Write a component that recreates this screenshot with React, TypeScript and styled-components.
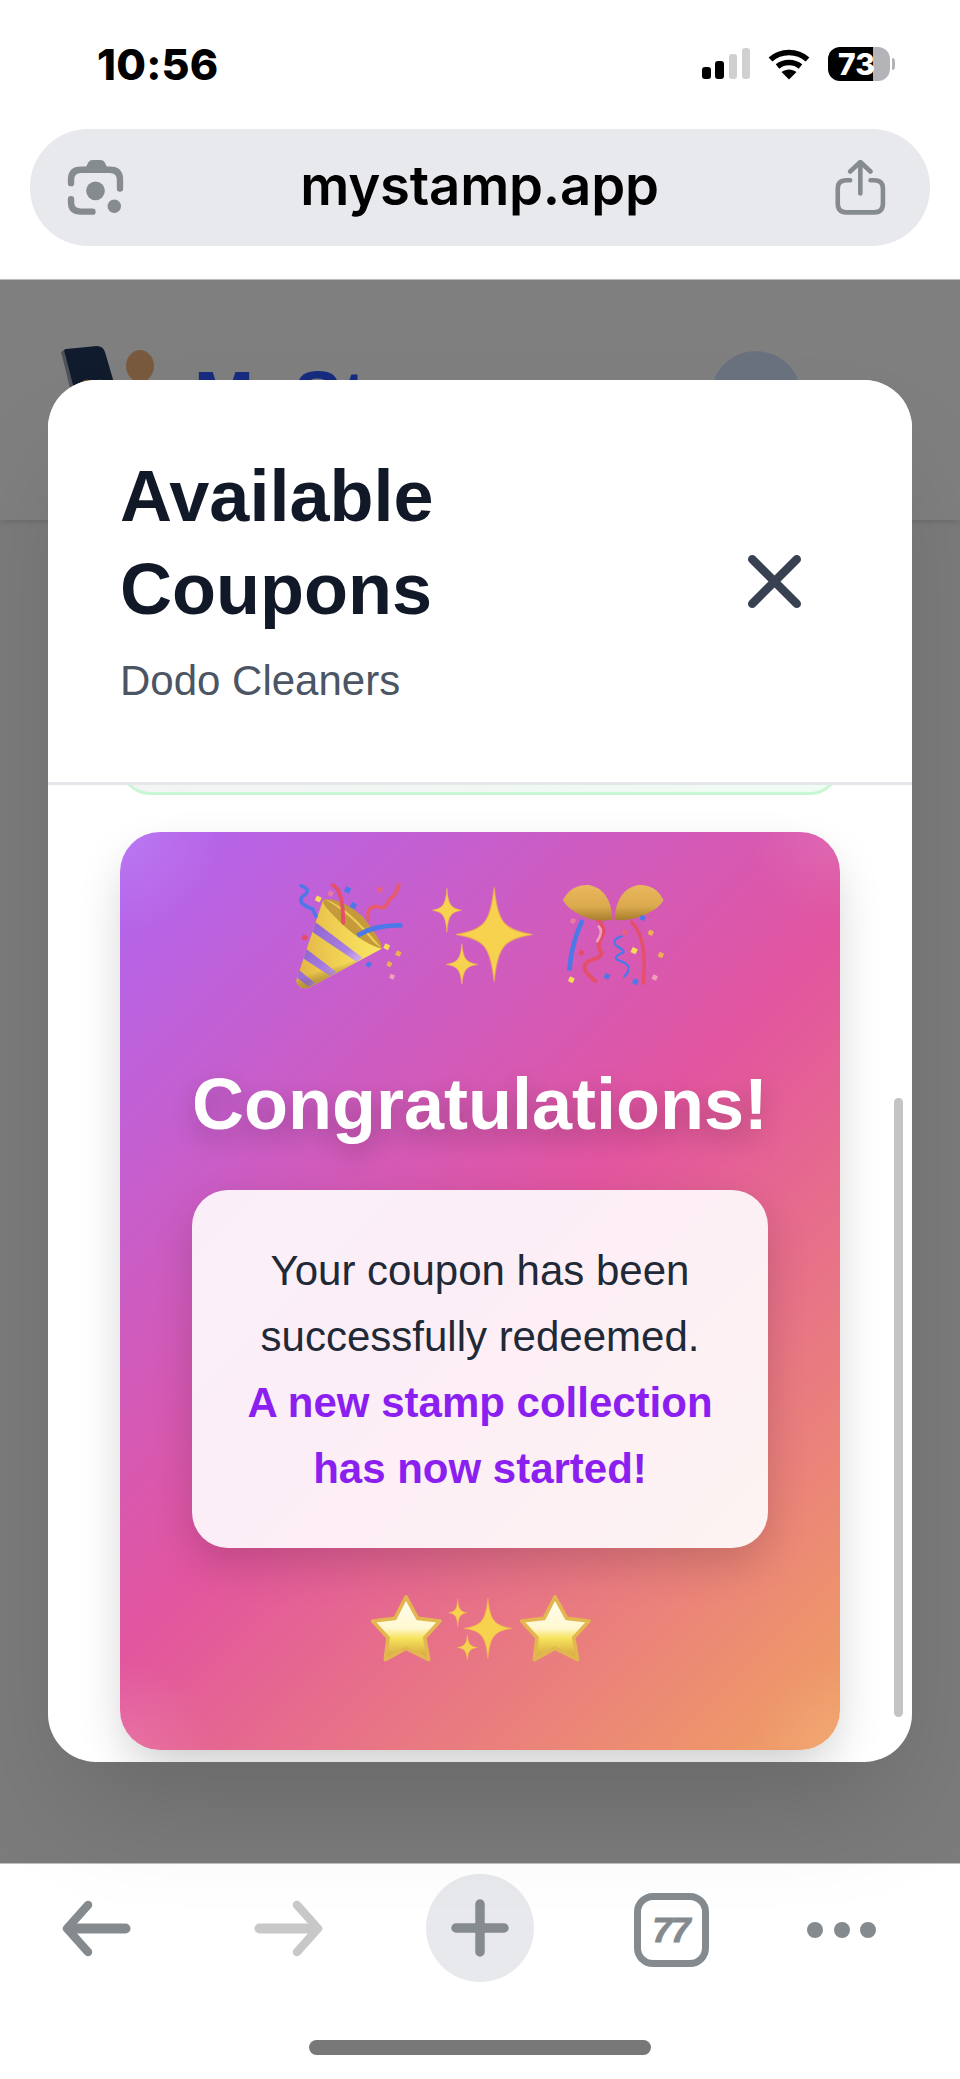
import React from "react";
import styled, { createGlobalStyle } from "styled-components";
import { X } from "lucide-react";

const Global = createGlobalStyle`
  html, body { margin: 0; padding: 0; background: #fff; }
  * { box-sizing: border-box; }
  #root { width: 960px; height: 2079px; }
`;

const Phone = styled.div`
  width: 960px;
  height: 2079px;
  display: flex;
  flex-direction: column;
  overflow: hidden;
  background: #fff;
  font-family: "Liberation Sans", Arial, sans-serif;
`;

const StatusBar = styled.div`
  height: 127px;
  flex: none;
  padding: 0 65px 0 97px;
  display: flex;
  align-items: center;
  justify-content: space-between;
`;

const Time = styled.span`
  font-family: Inter, "Liberation Sans", sans-serif;
  font-weight: 800;
  font-size: 43px;
  line-height: 50px;
  letter-spacing: 0.2px;
  color: #000;
`;

const StatusIcons = styled.div`
  display: flex;
  align-items: center;
  gap: 18px;
`;

const BatteryWrap = styled.div`
  display: flex;
  align-items: center;
  gap: 2px;
`;

const BatteryBody = styled.div`
  width: 62px;
  height: 34px;
  border-radius: 12px;
  background: linear-gradient(90deg, #000 45px, #b4b4b8 45px);
  color: #fff;
  font-family: Inter, "Liberation Sans", sans-serif;
  font-weight: 800;
  font-size: 30px;
  line-height: 34px;
  padding-left: 10px;
`;

const BatteryNub = styled.div`
  width: 3px;
  height: 12px;
  border-radius: 0 3px 3px 0;
  background: #b4b4b8;
`;

const UrlArea = styled.div`
  height: 152px;
  flex: none;
  padding: 2px 30px 0;
`;

const UrlBar = styled.div`
  height: 117px;
  border-radius: 58px;
  background: #e8e9ed;
  display: flex;
  align-items: center;
  justify-content: space-between;
  padding: 0 44px 0 37px;
`;

const UrlText = styled.span`
  font-family: Inter, "Liberation Sans", sans-serif;
  font-weight: 600;
  font-size: 54.5px;
  line-height: 64px;
  color: #000;
  letter-spacing: -0.2px;
  padding-bottom: 5px;
`;

const Viewport = styled.div`
  position: relative;
  flex: 1;
  min-height: 0;
  background: #f6f6f7;
  border-top: 1px solid #c0c0c0;
  border-bottom: 1px solid #c0c0c0;
`;

const PageHeader = styled.div`
  height: 240px;
  background: #fff;
  display: flex;
  align-items: flex-start;
  padding: 66px 159px 0 62px;
  box-shadow: 0 2px 6px rgba(0, 0, 0, 0.12);
`;

const Brand = styled.span`
  margin-left: 78px;
  margin-top: 3px;
  font-weight: 700;
  font-size: 72px;
  line-height: 96px;
  color: #2f58ff;
  flex: 1;
`;

const Avatar = styled.div`
  width: 90px;
  height: 90px;
  border-radius: 50%;
  margin-top: 5px;
  background: #d6e4ff;
`;

const Backdrop = styled.div`
  position: absolute;
  inset: 0;
  background: rgba(0, 0, 0, 0.5);
`;

const Modal = styled.div`
  position: absolute;
  left: 48px;
  top: 100px;
  width: 864px;
  height: 1382px;
  background: #fff;
  border-radius: 48px;
  overflow: hidden;
  display: flex;
  flex-direction: column;
  box-shadow: 0 60px 120px -30px rgba(0, 0, 0, 0.17);
`;

const ModalHeader = styled.div`
  flex: none;
  height: 405px;
  padding: 70px 93px 0 72px;
  border-bottom: 3px solid #e5e7eb;
  display: flex;
  align-items: flex-start;
  justify-content: space-between;
  background: #fff;
`;

const TitleBlock = styled.div`
  width: 440px;
`;

const Title = styled.h2`
  margin: 0;
  font-size: 72px;
  line-height: 93px;
  font-weight: 700;
  color: #111827;
`;

const Subtitle = styled.p`
  margin: 15px 0 0;
  font-size: 42px;
  line-height: 60px;
  color: #4b5563;
`;

const CloseButton = styled.div`
  color: #374151;
  display: flex;
  margin-top: 87px;
`;

const ScrollArea = styled.div`
  flex: 1;
  min-height: 0;
  overflow: hidden;
  padding: 0 72px;
`;

const PreviousCard = styled.div`
  height: 60px;
  margin-top: -50px;
  border: 3px solid #c9f7d6;
  border-radius: 36px;
  background: linear-gradient(90deg, #f3f4f4, #effcf3);
`;

const CongratsCard = styled.div`
  margin-top: 37px;
  height: 918px;
  border-radius: 40px;
  padding: 50px 72px 0;
  display: flex;
  flex-direction: column;
  align-items: center;
  background:
    radial-gradient(circle at 0 0, rgba(255, 255, 255, 0.12), transparent 100px),
    radial-gradient(circle at 100% 0, rgba(255, 255, 255, 0.1), transparent 90px),
    radial-gradient(circle at 0 100%, rgba(255, 255, 255, 0.12), transparent 90px),
    radial-gradient(circle at 100% 100%, rgba(255, 255, 255, 0.1), transparent 90px),
    linear-gradient(135deg, #b066f2 0%, #e2559f 50%, #f0a062 100%);
  box-shadow: 0 20px 50px -10px rgba(0, 0, 0, 0.24);
`;

const EmojiRow = styled.div`
  height: 107px;
  display: flex;
  align-items: center;
  justify-content: center;
  gap: 29px;
  margin-bottom: 67px;
`;

const Heading = styled.h3`
  margin: 0 0 38px;
  font-size: 72px;
  line-height: 96px;
  font-weight: 700;
  color: #fff;
  white-space: nowrap;
  text-shadow: 0 10px 24px rgba(0, 0, 0, 0.22);
`;

const MessageBox = styled.div`
  width: 576px;
  height: 358px;
  padding: 47.5px 0;
  border-radius: 36px;
  background: rgba(255, 255, 255, 0.9);
  box-shadow: 0 16px 40px rgba(0, 0, 0, 0.16);
  text-align: center;
  font-size: 42px;
  line-height: 66px;
  color: #1f2937;
`;

const Highlight = styled.strong`
  display: block;
  font-weight: 700;
  color: #8a1ff0;
`;

const StarRow = styled.div`
  margin-top: 47px;
  height: 67px;
  display: flex;
  align-items: center;
  gap: 6px;
`;

const ScrollThumb = styled.div`
  position: absolute;
  right: 9px;
  top: 718px;
  width: 9px;
  height: 619px;
  border-radius: 5px;
  background: #c4c4c4;
`;

const Toolbar = styled.div`
  flex: none;
  height: 215px;
  background: #fff;
  display: flex;
  flex-direction: column;
  align-items: center;
`;

const ToolRow = styled.div`
  width: 100%;
  margin-top: 10px;
  height: 108px;
  display: grid;
  grid-template-columns: 192px 192px 192px 190px 151px;
  justify-items: center;
  align-items: center;
`;

const PlusCircle = styled.div`
  width: 108px;
  height: 108px;
  border-radius: 50%;
  background: #e8e9ed;
  display: flex;
  align-items: center;
  justify-content: center;
`;

const TabCount = styled.div`
  width: 75px;
  height: 74px;
  margin-top: 3px;
  border: 7px solid #858a8e;
  border-radius: 19px;
  display: flex;
  align-items: center;
  justify-content: center;
  color: #858a8e;
  font-weight: 700;
  font-style: italic;
  font-size: 35px;
  line-height: 1;
  letter-spacing: -1px;
  -webkit-text-stroke: 1px #858a8e;
`;

const Dots = styled.div`
  display: flex;
  gap: 10.5px;
  margin-top: 3px;
`;

const Dot = styled.span`
  width: 16px;
  height: 16px;
  border-radius: 50%;
  background: #858a8e;
`;

const HomeIndicator = styled.div`
  width: 342px;
  height: 15px;
  margin-top: 58px;
  border-radius: 8px;
  background: #787878;
`;

const IconSvg = styled.svg`
  display: block;
  flex: none;
`;

const GRAY = "#868b8f";

const Signal = () => (
  <IconSvg width="48" height="32" viewBox="0 0 48 32">
    <rect x="0" y="19" width="9" height="12" rx="3" fill="#000" />
    <rect x="13" y="13" width="9" height="18" rx="3" fill="#000" />
    <rect x="27" y="6" width="8" height="25" rx="3" fill="#d0d0d0" />
    <rect x="40" y="0" width="8" height="31" rx="3" fill="#d0d0d0" />
  </IconSvg>
);

const Wifi = () => (
  <IconSvg width="42" height="32" viewBox="0 0 42 32" fill="none">
    <path d="M2.5 11.5C13 2.2 29 2.2 39.5 11.5" stroke="#000" strokeWidth="5.6" />
    <path d="M9.5 18.5C16 13.2 26 13.2 32.5 18.5" stroke="#000" strokeWidth="5.6" />
    <path d="M13.5 24C18 20.6 24 20.6 28.5 24L21 31.5Z" fill="#000" />
  </IconSvg>
);

const LensIcon = () => (
  <IconSvg width="57" height="57" viewBox="50 28 170 170" fill="none">
    <path d="M62 100V90Q62 60 92 60H178Q208 60 208 90V116" stroke={GRAY} strokeWidth="19" strokeLinecap="round" />
    <path d="M100 64L114 38Q118 31 126 31H150Q158 31 162 38L176 64Z" fill={GRAY} />
    <path d="M62 148V158Q62 185 92 185H126" stroke={GRAY} strokeWidth="19" strokeLinecap="round" />
    <circle cx="135" cy="123" r="28" fill={GRAY} />
    <circle cx="191" cy="169" r="20" fill={GRAY} />
  </IconSvg>
);

const ShareIcon = () => (
  <IconSvg width="51" height="55" viewBox="30 30 155 168" fill="none" stroke={GRAY} strokeWidth="14" strokeLinecap="round" strokeLinejoin="round">
    <path d="M107 132V38M76 65L107 36L138 65" />
    <path d="M76 92H64Q38 92 38 118V164Q38 190 64 190H150Q176 190 176 164V118Q176 92 150 92H138" />
  </IconSvg>
);

const ArrowIcon = ({ color, flip }: { color: string; flip?: boolean }) => (
  <IconSvg
    width="69"
    height="57"
    viewBox="0 0 69 57"
    fill="none"
    stroke={color}
    strokeLinecap="round"
    strokeLinejoin="round"
    transform={flip ? "scale(-1 1)" : undefined}
  >
    <path d="M63.5 28.5H8" strokeWidth="10" />
    <path d="M26 5L5 28.5L26 52" strokeWidth="8.5" />
  </IconSvg>
);

const PlusIcon = () => (
  <IconSvg width="58" height="58" viewBox="0 0 58 58" fill="none" stroke={GRAY} strokeWidth="9.5" strokeLinecap="round">
    <path d="M29 5V53M5 29H53" />
  </IconSvg>
);

const PageLogo = () => (
  <IconSvg width="54" height="70" viewBox="0 0 54 70" style={{ overflow: "visible" }}>
    <path d="M4 3Q0 4 1 9L18 70H62L50 30L43 6Q41 0 35 0Z" fill="#22365c" />
    <path d="M2 4L-1 6L15 70H19Z" fill="#a0a8b4" />
    <ellipse cx="78" cy="20" rx="14" ry="16" fill="#f5b47c" />
    <path d="M72 32H86L84 70H60Z" fill="#f5b47c" />
    <path d="M20 38Q25 32 30 38M33 38Q38 32 43 38" stroke="#f0a858" strokeWidth="3" fill="none" />
  </IconSvg>
);

const diamond = (x: number, y: number, s: number, fill: string, key: string) => (
  <rect key={key} x={x - s / 2} y={y - s / 2} width={s} height={s} rx={2} fill={fill} transform={`rotate(25 ${x} ${y})`} />
);

const PartyPopper = () => (
  <IconSvg width="107" height="107" viewBox="140 97 322 322" fill="none">
    <defs>
      <linearGradient id="coneGold" x1="0" y1="0.4" x2="1" y2="0.4">
        <stop offset="0" stopColor="#e2b445" />
        <stop offset="0.55" stopColor="#f2d455" />
        <stop offset="1" stopColor="#fae566" />
      </linearGradient>
      <linearGradient id="coneShade" x1="0.7" y1="0.35" x2="0.85" y2="0.85">
        <stop offset="0.6" stopColor="#000" stopOpacity="0" />
        <stop offset="1" stopColor="#8a6a20" stopOpacity="0.55" />
      </linearGradient>
      <linearGradient id="stripe" x1="0" y1="0" x2="1" y2="1">
        <stop offset="0" stopColor="#8f62d2" />
        <stop offset="0.7" stopColor="#a97fe0" />
        <stop offset="1" stopColor="#d8b8ee" />
      </linearGradient>
      <clipPath id="coneClip">
        <path d="M222 150L140 395Q148 422 178 416L398 298Z" />
      </clipPath>
    </defs>
    <path d="M222 150L140 395Q148 422 178 416L398 298Z" fill="url(#coneGold)" />
    <g clipPath="url(#coneClip)">
      <path d="M195 215L340 325L322 337L186 245Z" fill="url(#stripe)" />
      <path d="M170 298L262 368L243 380L160 326Z" fill="url(#stripe)" />
      <path d="M147 360L198 402L180 413L140 383Z" fill="url(#stripe)" />
      <path d="M222 150L140 395Q148 422 178 416L398 298Z" fill="url(#coneShade)" />
    </g>
    <path d="M222 150Q215 160 250 195Q330 280 398 298Q404 280 340 200Q270 140 222 150Z" fill="#c49a3a" />
    <path d="M228 150Q290 165 398 296L375 280Q300 190 228 150Z" fill="#eccb55" />
    <path d="M155 108Q190 122 160 140Q140 160 190 178L200 200" stroke="#4d78e8" strokeWidth="11" strokeLinecap="round" />
    <path d="M250 106Q282 120 282 220" stroke="#e4506a" strokeWidth="12" strokeLinecap="round" />
    <path d="M358 210Q350 170 385 170Q410 185 420 150Q440 140 450 105" stroke="#e85a6c" strokeWidth="11" strokeLinecap="round" />
    <path d="M325 258Q380 225 460 228" stroke="#4d78e8" strokeWidth="14" />
    {[
      diamond(207, 148, 16, "#f6dc55", "a"),
      diamond(244, 132, 15, "#e87aa0", "b"),
      diamond(295, 121, 17, "#4d78e8", "c"),
      diamond(313, 168, 17, "#4d78e8", "d"),
      diamond(392, 120, 15, "#e8607a", "e"),
      diamond(166, 264, 15, "#e84a62", "f"),
      diamond(413, 292, 16, "#f6dc55", "g"),
      diamond(448, 312, 15, "#eeb14f", "h"),
      diamond(421, 344, 14, "#eeb14f", "i"),
      diamond(359, 345, 15, "#4d78e8", "j"),
      diamond(429, 382, 14, "#f0a0b8", "k"),
    ]}
  </IconSvg>
);

const spark = (cx: number, cy: number, rx: number, ry: number) => {
  const wx = rx * 0.1;
  const wy = ry * 0.1;
  const ax = rx * 0.25;
  const ay = ry * 0.25;
  return [
    `M${cx} ${cy - ry}`,
    `C${cx + wx} ${cy - ay} ${cx + ax} ${cy - wy} ${cx + rx} ${cy}`,
    `C${cx + ax} ${cy + wy} ${cx + wx} ${cy + ay} ${cx} ${cy + ry}`,
    `C${cx - wx} ${cy + ay} ${cx - ax} ${cy + wy} ${cx - rx} ${cy}`,
    `C${cx - ax} ${cy - wy} ${cx - wx} ${cy - ay} ${cx} ${cy - ry}Z`,
  ].join("");
};

const Sparkles = ({ width, height }: { width: number; height: number }) => (
  <IconSvg width={width} height={height} viewBox="548 112 304 292">
    <path d={spark(735, 255, 115, 142)} fill="#f6d24e" stroke="#eeb24a" strokeOpacity="0.6" strokeWidth="4" />
    <path d={spark(593, 182, 44, 66)} fill="#f6d24e" stroke="#eeb24a" strokeOpacity="0.6" strokeWidth="3" />
    <path d={spark(638, 345, 48, 62)} fill="#f6d24e" stroke="#eeb24a" strokeOpacity="0.6" strokeWidth="3" />
  </IconSvg>
);

const ConfettiBall = () => (
  <IconSvg width="103" height="103" viewBox="938 95 314 315" fill="none">
    <defs>
      <linearGradient id="domeGold" x1="0" y1="0" x2="0" y2="1">
        <stop offset="0" stopColor="#e9b85c" />
        <stop offset="0.6" stopColor="#dcaa4e" />
        <stop offset="1" stopColor="#a67d2e" />
      </linearGradient>
    </defs>
    <path d="M1000 205Q965 280 960 360" stroke="#4d78e8" strokeWidth="14" strokeLinecap="butt" />
    <path d="M1040 198Q1075 225 1060 255Q1040 285 1058 305Q1060 320 1020 330Q985 350 1040 392" stroke="#e4506a" strokeWidth="12" strokeLinecap="round" />
    <path d="M1050 225Q1065 240 1045 270" stroke="#f0a0c0" strokeWidth="8" strokeLinecap="round" />
    <path d="M1120 255Q1085 265 1105 285Q1130 298 1125 305Q1085 320 1115 330Q1160 345 1128 378" stroke="#4d78e8" strokeWidth="7" strokeLinecap="round" />
    <path d="M1150 212Q1200 260 1186 398" stroke="#e4506a" strokeWidth="11" strokeLinecap="round" />
    <path d="M940 145Q965 95 1020 98Q1085 110 1092 200Q1092 208 1060 207Q1015 205 985 185Q955 170 940 145Z" fill="url(#domeGold)" />
    <path d="M1248 145Q1225 95 1170 98Q1104 112 1098 202Q1098 208 1130 205Q1175 200 1205 182Q1235 168 1248 145Z" fill="url(#domeGold)" />
    {[
      diamond(971, 208, 15, "#e87aa0", "a"),
      diamond(1184, 199, 15, "#4d78e8", "b"),
      diamond(1130, 243, 15, "#e8607a", "c"),
      diamond(1209, 244, 15, "#eeb14f", "d"),
      diamond(997, 305, 14, "#e84a62", "e"),
      diamond(1158, 299, 17, "#f6dc55", "f"),
      diamond(1240, 312, 15, "#eeb14f", "g"),
      diamond(966, 388, 16, "#f6dc55", "h"),
      diamond(1075, 377, 16, "#4d78e8", "i"),
      diamond(1162, 394, 16, "#4d78e8", "j"),
      diamond(1221, 381, 15, "#f0a0b8", "k"),
    ]}
  </IconSvg>
);

const Star = ({ id }: { id: string }) => (
  <IconSvg width="72" height="67" viewBox="22 30 216 201">
    <defs>
      <linearGradient id={id} x1="0" y1="0" x2="0" y2="1">
        <stop offset="0" stopColor="#fffef2" />
        <stop offset="0.5" stopColor="#fff8d0" />
        <stop offset="0.66" stopColor="#f7e35c" />
        <stop offset="1" stopColor="#cf9f3c" />
      </linearGradient>
    </defs>
    <path
      d="M130 36L165 100L232 108L186 158L198 224L130 190L68 224L76 158L30 108L97 100Z"
      fill={`url(#${id})`}
      stroke="#e3b64f"
      strokeWidth="11"
      strokeLinejoin="round"
    />
  </IconSvg>
);

export default function App() {
  return (
    <Phone>
      <Global />
      <StatusBar>
        <Time>10:56</Time>
        <StatusIcons>
          <Signal />
          <Wifi />
          <BatteryWrap>
            <BatteryBody>73</BatteryBody>
            <BatteryNub />
          </BatteryWrap>
        </StatusIcons>
      </StatusBar>
      <UrlArea>
        <UrlBar>
          <LensIcon />
          <UrlText>mystamp.app</UrlText>
          <ShareIcon />
        </UrlBar>
      </UrlArea>
      <Viewport>
        <PageHeader>
          <PageLogo />
          <Brand>MyStamp</Brand>
          <Avatar />
        </PageHeader>
        <Backdrop />
        <Modal>
          <ModalHeader>
            <TitleBlock>
              <Title>Available Coupons</Title>
              <Subtitle>Dodo Cleaners</Subtitle>
            </TitleBlock>
            <CloseButton>
              <X size={89} strokeWidth={2.3} />
            </CloseButton>
          </ModalHeader>
          <ScrollArea>
            <PreviousCard />
            <CongratsCard>
              <EmojiRow>
                <PartyPopper />
                <Sparkles width={101} height={97} />
                <ConfettiBall />
              </EmojiRow>
              <Heading>Congratulations!</Heading>
              <MessageBox>
                Your coupon has been
                <br />
                successfully redeemed.
                <Highlight>
                  A new stamp collection
                  <br />
                  has now started!
                </Highlight>
              </MessageBox>
              <StarRow>
                <Star id="starA" />
                <Sparkles width={65} height={62} />
                <Star id="starB" />
              </StarRow>
            </CongratsCard>
          </ScrollArea>
          <ScrollThumb />
        </Modal>
      </Viewport>
      <Toolbar>
        <ToolRow>
          <ArrowIcon color="#858a8e" />
          <ArrowIcon color="#c8c8c8" flip />
          <PlusCircle>
            <PlusIcon />
          </PlusCircle>
          <TabCount>77</TabCount>
          <Dots>
            <Dot />
            <Dot />
            <Dot />
          </Dots>
        </ToolRow>
        <HomeIndicator />
      </Toolbar>
    </Phone>
  );
}
